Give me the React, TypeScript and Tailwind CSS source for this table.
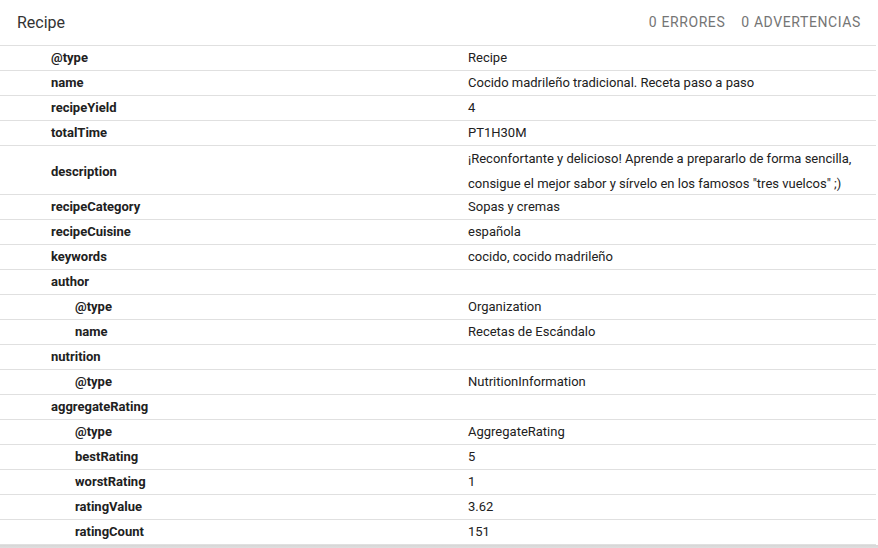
const rows: { k: string; v?: string; d?: number; tall?: boolean }[] = [
  { k: "@type", v: "Recipe" },
  { k: "name", v: "Cocido madrileño tradicional. Receta paso a paso" },
  { k: "recipeYield", v: "4" },
  { k: "totalTime", v: "PT1H30M" },
  {
    k: "description",
    v: '¡Reconfortante y delicioso! Aprende a prepararlo de forma sencilla, consigue el mejor sabor y sírvelo en los famosos "tres vuelcos" ;)',
    tall: true,
  },
  { k: "recipeCategory", v: "Sopas y cremas" },
  { k: "recipeCuisine", v: "española" },
  { k: "keywords", v: "cocido, cocido madrileño" },
  { k: "author" },
  { k: "@type", v: "Organization", d: 1 },
  { k: "name", v: "Recetas de Escándalo", d: 1 },
  { k: "nutrition" },
  { k: "@type", v: "NutritionInformation", d: 1 },
  { k: "aggregateRating" },
  { k: "@type", v: "AggregateRating", d: 1 },
  { k: "bestRating", v: "5", d: 1 },
  { k: "worstRating", v: "1", d: 1 },
  { k: "ratingValue", v: "3.62", d: 1 },
  { k: "ratingCount", v: "151", d: 1 },
];

export default function App() {
  return (
    <div className="h-[548px] w-[878px] overflow-hidden bg-white font-['Roboto',sans-serif] text-[#212121]">
      <div className="flex h-[45px] items-center justify-between pl-[17px] pr-[17px]">
        <span className="text-[16px] text-[#333]">Recipe</span>
        <div className="flex gap-[16px] text-[14px] tracking-[0.6px] text-[#757575]">
          <span>0 ERRORES</span>
          <span>0 ADVERTENCIAS</span>
        </div>
      </div>
      <div className="mr-[2px] border-t border-[#e0e0e0]">
        {rows.map((r, i) => (
          <div
            key={i}
            className={`grid grid-cols-[468px_1fr] border-b border-[#e0e0e0] text-[13px] ${r.tall ? "h-[49px] items-center leading-[25px]" : "h-[25px] items-center leading-[24px]"}`}
          >
            <div className={`font-bold ${r.d ? "pl-[75px]" : "pl-[51px]"}`}>{r.k}</div>
            <div className="pr-[20px]">{r.v}</div>
          </div>
        ))}
      </div>
      <div className="h-[6px] bg-gradient-to-b from-[#d6d6d6] to-[#e8e8e8]" />
    </div>
  );
}
